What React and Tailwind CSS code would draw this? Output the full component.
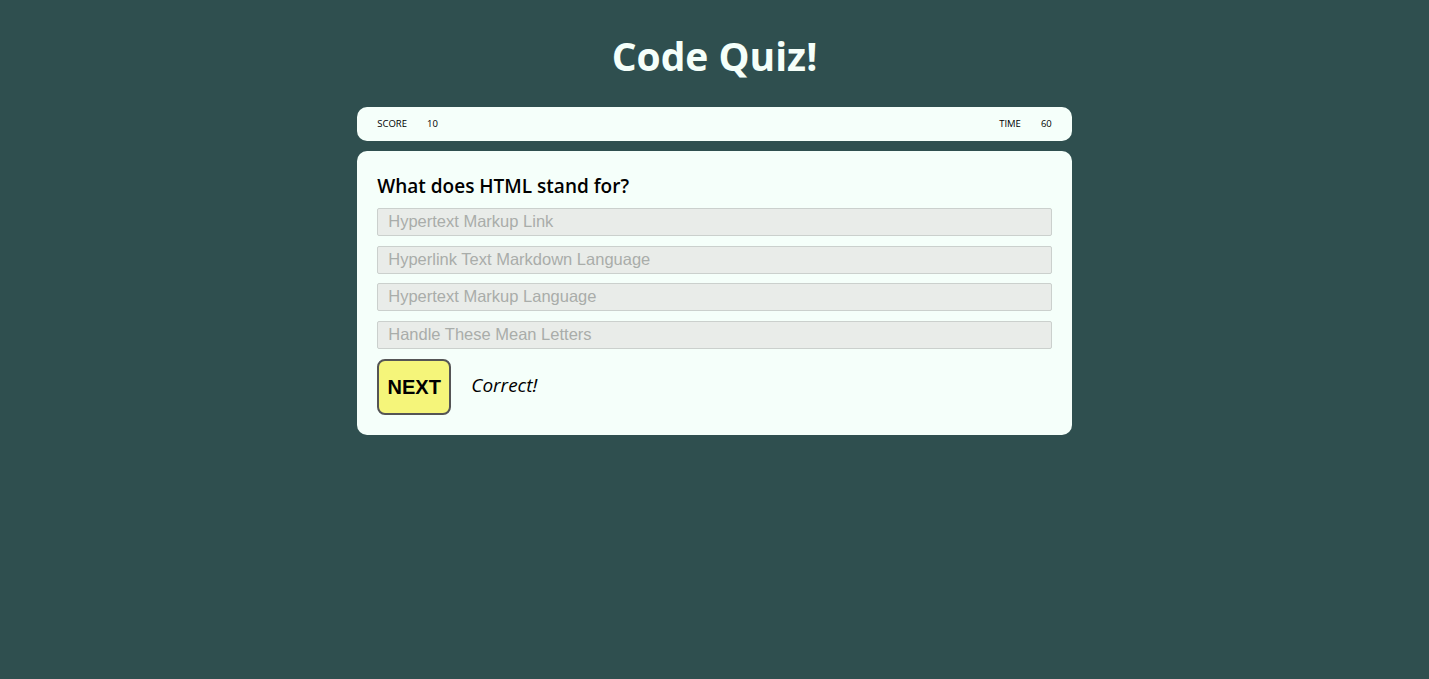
const answers = [
  'Hypertext Markup Link',
  'Hyperlink Text Markdown Language',
  'Hypertext Markup Language',
  'Handle These Mean Letters',
];

export default function App() {
  return (
    <div className="min-h-screen bg-[#2f4f4f] font-['Open_Sans',sans-serif] pt-[28px]">
      <h1 className="text-center text-[39px] font-bold leading-[56px] text-[#f5fffa]">Code Quiz!</h1>

      <div className="mx-auto w-1/2 mt-[23px]">
        {/* Score bar */}
        <div className="flex items-center justify-between h-[34px] px-5 rounded-[10px] bg-[#f5fffa] text-[9.5px] text-black">
          <div className="flex gap-[20px]">
            <span>SCORE</span>
            <span>10</span>
          </div>
          <div className="flex gap-[20px]">
            <span>TIME</span>
            <span>60</span>
          </div>
        </div>

        {/* Question card */}
        <div className="mt-[10px] rounded-[10px] bg-[#f5fffa] px-5 pt-[22px] pb-[20px]">
          <h2 className="text-[19px] font-semibold leading-[26px] text-black mb-[9px]">What does HTML stand for?</h2>
          <div className="flex flex-col gap-[9.5px]">
            {answers.map((a) => (
              <button
                key={a}
                disabled
                className="h-[28px] w-full text-left px-[10px] pb-[2px] font-['Liberation_Sans',Arial,sans-serif] text-[16.5px] text-[#a9adaa] bg-[#e9ece9] border border-[#cbd0cd] rounded-[2px]"
              >
                {a}
              </button>
            ))}
          </div>
          <div className="flex items-center gap-5 mt-[10px]">
            <button className="w-[74px] h-[56px] rounded-[8px] border-2 border-[#555] bg-[#f5f57a] font-['Liberation_Sans',Arial,sans-serif] font-bold text-[20px] text-black">
              NEXT
            </button>
            <span className="italic text-[19px] text-black pb-[3px]">Correct!</span>
          </div>
        </div>
      </div>
    </div>
  );
}
